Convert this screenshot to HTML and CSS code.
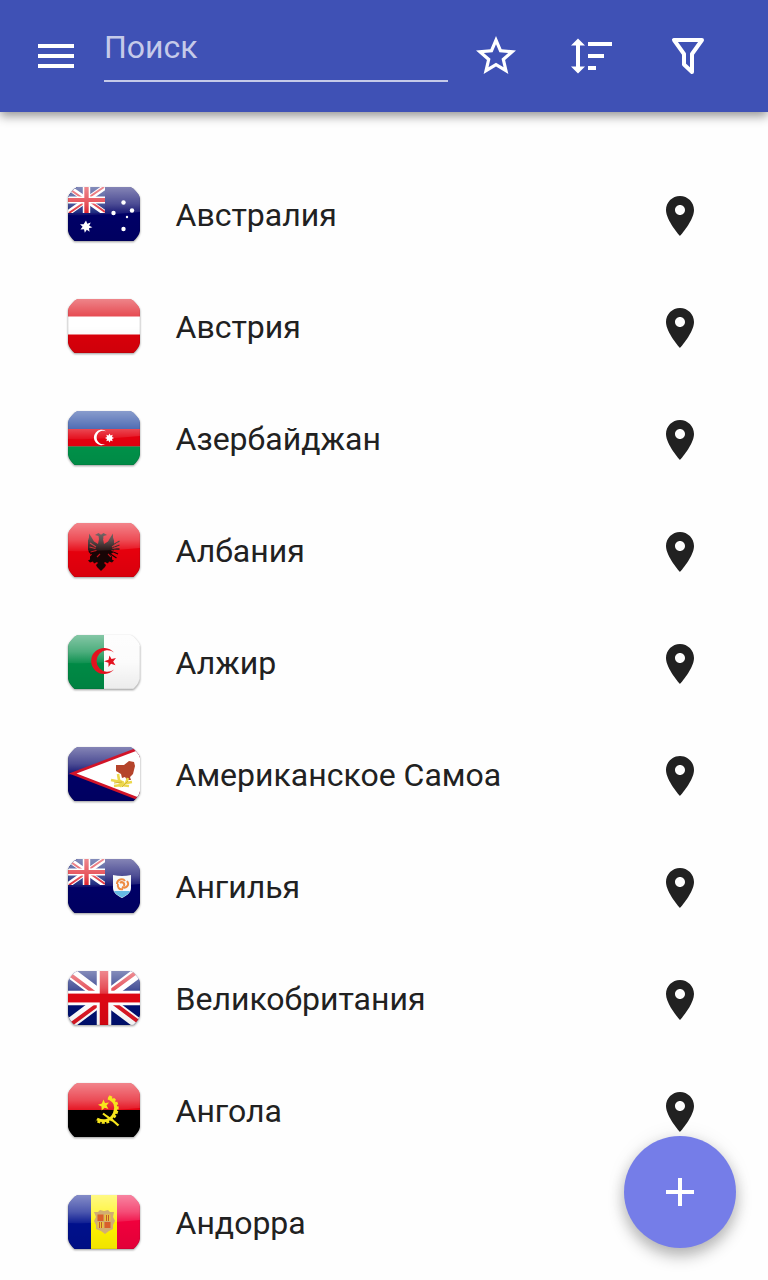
FILE: index.html
```html
<!DOCTYPE html>
<html lang="ru">

<head>
  <meta charset="utf-8">
  <meta name="viewport" content="width=device-width, initial-scale=1">
  <title>Страны</title>
  <link rel="stylesheet" href="styles.css">
</head>

<body>
  <svg class="defs" width="0" height="0" aria-hidden="true">
    <defs>
      <clipPath id="flag-shape">
        <path d="M0 11Q.5 8 3.500 5Q6.500 1 9.500 0H62.500Q65.500 1 68.500 5Q71.500 8 72 11V44Q71 49 65.500 54H6.500Q1 49 0 44z" />
      </clipPath>
      <linearGradient id="gloss-fill" x1="0" y1="0" x2="0" y2="1">
        <stop offset="0" stop-color="#fff" stop-opacity=".52" />
        <stop offset=".6" stop-color="#fff" stop-opacity=".3" />
        <stop offset="1" stop-color="#fff" stop-opacity=".06" />
      </linearGradient>
      <linearGradient id="shade-fill" x1="0" y1="0" x2="0" y2="1">
        <stop offset="0" stop-color="#000" stop-opacity="0" />
        <stop offset="1" stop-color="#000" stop-opacity=".06" />
      </linearGradient>
      <symbol id="gloss" viewBox="0 0 72 54">
        <path fill="url(#gloss-fill)" d="M0 0H72V25Q36 29 0 28z" />
        <path fill="url(#shade-fill)" d="M0 27H72V54H0z" />
        <path fill="none" stroke="#000" stroke-opacity=".12" d="M0 11V44Q1 49 6.500 54H65.500Q71 49 72 44V11" />
      </symbol>
      <symbol id="jack" viewBox="0 0 72 54" preserveAspectRatio="none">
        <path fill="#001070" d="M0 0h72v54H0z" />
        <path stroke="#fff" stroke-width="11" d="M0 0l72 54M72 0L0 54" />
        <path stroke="#dc1824" stroke-width="4" d="M0 2l36 27M36 25l36 27M70 0L36 25M36 29L2 54" />
        <path stroke="#fff" stroke-width="14.500" d="M36 0v54M0 27h72" />
        <path stroke="#dc0814" stroke-width="8.500" d="M36 0v54M0 27h72" />
      </symbol>
      <symbol id="pin" viewBox="0 0 24 24">
        <path d="M12 2C8.130 2 5 5.130 5 9c0 5.250 7 13 7 13s7-7.750 7-13c0-3.870-3.130-7-7-7zm0 9.500c-1.380 0-2.500-1.120-2.500-2.500s1.120-2.500 2.500-2.500 2.500 1.120 2.500 2.500-1.120 2.500-2.500 2.500z" />
      </symbol>
    </defs>
  </svg>

  <header class="toolbar">
    <button class="icon-button">
      <svg class="icon" viewBox="0 0 24 24"><path d="M3 18h18v-2H3v2zm0-5h18v-2H3v2zm0-7v2h18V6H3z" /></svg>
    </button>
    <input class="search" type="text" placeholder="Поиск" autocomplete="off">
    <div class="actions">
      <button class="icon-button">
        <svg class="icon" viewBox="0 0 24 24"><path d="M22 9.240l-7.190-.62L12 2 9.190 8.630 2 9.240l5.460 4.730L5.820 21 12 17.270 18.180 21l-1.630-7.030L22 9.240zM12 15.400l-3.760 2.270 1-4.280-3.320-2.880 4.380-.38L12 6.100l1.710 4.040 4.380.38-3.320 2.880 1 4.280L12 15.400z" /></svg>
      </button>
      <button class="icon-button">
        <svg class="icon" viewBox="0 0 48 48"><path d="M10 6.500l7 7h-5v21h5l-7 7-7-7h5v-21H3zM20 10h24v4H20zM20 22h16v4H20zM20 34h8v4h-8z" /></svg>
      </button>
      <button class="icon-button">
        <svg class="icon" viewBox="0 0 48 48"><path fill="none" stroke="currentColor" stroke-width="4" stroke-linejoin="round" d="M10 8h28L28 22v18l-8-7.500V22z" /></svg>
      </button>
    </div>
  </header>

  <ul class="list">
    <li class="row">
      <svg class="flag" viewBox="0 0 72 58">
        <g clip-path="url(#flag-shape)">
          <path fill="#000066" d="M0 0h72v54H0z" />
          <use href="#jack" width="37" height="26" />
          <use href="#gloss" width="72" height="54" />
          <path fill="#fff" d="M18 33.500l1.300 3.300 3.400-1.200-1.500 3.200 3.200 1.500-3.400 1 .6 3.500-2.800-2-2 3-.8-3.600-3.600.4 2.200-2.800-2.600-2.500 3.600-.1z" />
          <g fill="#fff">
            <circle cx="55.500" cy="15.500" r="2.200" />
            <circle cx="45.500" cy="26" r="2.200" />
            <circle cx="64" cy="23.500" r="2.200" />
            <circle cx="59" cy="30" r="1.200" />
            <circle cx="55.500" cy="42" r="2.200" />
          </g>
        </g>
      </svg>
      <span class="name">Австралия</span>
      <svg class="pin"><use href="#pin" /></svg>
    </li>
    <li class="row">
      <svg class="flag" viewBox="0 0 72 58">
        <g clip-path="url(#flag-shape)">
          <path fill="#dc000a" d="M0 0h72v54H0z" />
          <path fill="#fff" d="M0 17.500h72v18H0z" />
          <use href="#gloss" width="72" height="54" />
        </g>
      </svg>
      <span class="name">Австрия</span>
      <svg class="pin"><use href="#pin" /></svg>
    </li>
    <li class="row">
      <svg class="flag" viewBox="0 0 72 58">
        <g clip-path="url(#flag-shape)">
          <path fill="#0a3296" d="M0 0h72v18H0z" />
          <path fill="#e3000f" d="M0 18h72v17.500H0z" />
          <path fill="#00934a" d="M0 35.500h72V54H0z" />
          <use href="#gloss" width="72" height="54" />
          <path fill="#fff" d="M38 20.200a7.700 7.700 0 1 0 0 12.600 6.800 6.800 0 1 1 0-12.600z" />
          <path fill="#fff" d="M41.500 22.500l1 2 2.200-.7-.7 2.200 2 1-2 1 .7 2.200-2.200-.7-1 2-1-2-2.200.7.7-2.200-2-1 2-1-.7-2.200 2.200.7z" />
        </g>
      </svg>
      <span class="name">Азербайджан</span>
      <svg class="pin"><use href="#pin" /></svg>
    </li>
    <li class="row">
      <svg class="flag" viewBox="0 0 72 58">
        <g clip-path="url(#flag-shape)">
          <path fill="#e6000d" d="M0 0h72v54H0z" />
          <path fill="#180505" d="M36 16l-2-3.500-3.500-2.500-3.500 2 3.500 1 .5 3-1 5-4-2.500-3-5-2-3 0 4-1 3 0 3 0 3 0 3 1 3 3 2-2 2 0 3-2 1 2 2 3-1 1 2 3-1.500 1 1-2 2 1 2 4 4 4-4 1-2-2-2 1-1 3 1.500 1-2 3 1 2-2-2-1 0-3-2-2 3-2 1-3 0-3 0-3 0-3-1-3 0-4-2 3-3 5-4 2.500-1-5 .5-3 3.500-1-3.500-2-3.500 2.500z" />
          <path fill="none" stroke="#180505" stroke-width="1.300" d="M20.500 18l10 6M20.500 22l10 4M20.500 26h10M22 31l9-4M23.500 35l9-6M51.500 18l-10 6M51.500 22l-10 4M51.500 26h-10M50 31l-9-4M48.500 35l-9-6" />
          <path fill="none" stroke="#c4121a" stroke-width="1.100" d="M22 20l6 4M21.500 24l6 1.500M22.500 29l6-1.500M29 34l3-3M50 20l-6 4M50.500 24l-6 1.500M49.500 29l-6-1.500M43 34l-3-3" />
          <use href="#gloss" width="72" height="54" />
        </g>
      </svg>
      <span class="name">Албания</span>
      <svg class="pin"><use href="#pin" /></svg>
    </li>
    <li class="row">
      <svg class="flag" viewBox="0 0 72 58">
        <g clip-path="url(#flag-shape)">
          <path fill="#008a45" d="M0 0h36v54H0z" />
          <path fill="#fbfbfb" d="M36 0h36v54H36z" />
          <use href="#gloss" width="72" height="54" />
          <path fill="#e3121f" d="M46 17.500a13 13 0 1 0 0 17 10.800 10.800 0 1 1 0-17z" />
          <path fill="#e3121f" d="M41.500 20.500l2 3.600 4.500-1-2.800 3.400 2.300 3.700-4.500-1.400-2.500 3.200v-4.300l-4.500-1.500 4.500-1.400z" />
        </g>
      </svg>
      <span class="name">Алжир</span>
      <svg class="pin"><use href="#pin" /></svg>
    </li>
    <li class="row">
      <svg class="flag" viewBox="0 0 72 58">
        <g clip-path="url(#flag-shape)">
          <path fill="#000066" d="M0 0h72v54H0z" />
          <use href="#gloss" width="72" height="54" />
          <path fill="#d21428" d="M1 26.500L72-.5v54.500z" />
          <path fill="#fff" d="M8.500 26.500L72 2.500v48.500z" />
          <path fill="#b5442b" d="M48 18l8 0 5-4 5 1 1 4-2 8-3 3 1 3-4 0-2-3-3 1-1-4-5-3z" />
          <path fill="none" stroke="#ecd84c" stroke-width="2.600" d="M43 33l5 1 5 2M46 39l7-1 8 1M50 27l1 6 5 4M60 31l-2 5 6-1M55 34l-3 6" />
          <path fill="none" stroke="#d6b433" d="M46 36l8-1M54 40l6-6" />
        </g>
      </svg>
      <span class="name">Американское Самоа</span>
      <svg class="pin"><use href="#pin" /></svg>
    </li>
    <li class="row">
      <svg class="flag" viewBox="0 0 72 58">
        <g clip-path="url(#flag-shape)">
          <path fill="#000066" d="M0 0h72v54H0z" />
          <use href="#jack" width="37" height="26" />
          <use href="#gloss" width="72" height="54" />
          <path fill="#f5f8fa" d="M45 16q9 2 18 0v13c0 5-5 8-9 10-4-2-9-5-9-10z" />
          <path fill="#65b9e4" d="M46 32h16c-1 3-5 5-8 6.500-3-1.500-7-3.500-8-6.500z" />
          <path fill="none" stroke="#ee8a40" stroke-width="2" d="M49 25c0-5 6-6 8-3M59 22c3 4-1 8-5 6M55 30c-4 1-6-2-5-5M52 24c2-2 5 0 4 3" />
        </g>
      </svg>
      <span class="name">Ангилья</span>
      <svg class="pin"><use href="#pin" /></svg>
    </li>
    <li class="row">
      <svg class="flag" viewBox="0 0 72 58">
        <g clip-path="url(#flag-shape)">
          <use href="#jack" width="72" height="54" />
          <use href="#gloss" width="72" height="54" />
          <path fill="#dc0814" d="M0 22.800h72v8.400H0z" />
        </g>
      </svg>
      <span class="name">Великобритания</span>
      <svg class="pin"><use href="#pin" /></svg>
    </li>
    <li class="row">
      <svg class="flag" viewBox="0 0 72 58">
        <g clip-path="url(#flag-shape)">
          <path fill="#e3000f" d="M0 0h72v27H0z" />
          <use href="#gloss" width="72" height="54" />
          <path fill="#000" d="M0 27h72v27H0z" />
          <path fill="none" stroke="#f6e51c" stroke-width="3" d="M40 15c7 2 9.500 9 6.500 15-3 7-10 10-17.500 6" />
          <path fill="none" stroke="#f6e51c" stroke-width="2.500" stroke-dasharray="3 1.500" d="M41 13.500c8.500 3 10 11 7 17.500-4 8-12 11-20 6.500" />
          <path fill="none" stroke="#f6e51c" stroke-width="2.200" d="M35 30.500c5 4 11 7 15.500 12" />
          <path fill="#f6e51c" d="M35.500 16.500l1.500 3.500 4-.5-2.500 3 2 3.500-3.800-1.200-3 2.700-.2-4-3.500-1.700 3.800-1.300z" />
        </g>
      </svg>
      <span class="name">Ангола</span>
      <svg class="pin"><use href="#pin" /></svg>
    </li>
    <li class="row">
      <svg class="flag" viewBox="0 0 72 58">
        <g clip-path="url(#flag-shape)">
          <path fill="#00108c" d="M0 0h23v54H0z" />
          <path fill="#fff200" d="M23 0h26v54H23z" />
          <path fill="#f0003c" d="M49 0h23v54H49z" />
          <use href="#gloss" width="72" height="54" />
          <path fill="#d2ae72" d="M26 17l4 0 2-2 4 1 4-1 2 2 4 0-1 5 2 4-2 4 0 4-4 2-4 3-4-3-5-2 0-4-2-4 2-4z" />
          <path fill="#d95f2b" d="M29.500 19.500h6v6.500h-6zM36.500 27h6v6h-6z" />
          <path fill="#edc53a" d="M36.500 19.500h6v6.500h-6zM29.500 27h6v6h-6z" />
          <path fill="none" stroke="#c05a2a" d="M38.500 20v6M40.500 20v6M31.500 27v6M33.500 27v6" />
        </g>
      </svg>
      <span class="name">Андорра</span>
      <svg class="pin"><use href="#pin" /></svg>
    </li>
  </ul>

  <button class="fab">
    <svg class="icon" viewBox="0 0 24 24"><path d="M19 13h-6v6h-2v-6H5v-2h6V5h2v6h6v2z" /></svg>
  </button>
</body>

</html>
```
FILE: styles.css
```css
* {
  box-sizing: border-box;
  margin: 0;
  padding: 0;
}

body {
  background: #fefefe;
  color: #212121;
  font-family: Roboto, "Noto Sans", sans-serif;
  font-size: 32px;
}

button {
  border: none;
  background: transparent;
  color: #fff;
}

.defs {
  display: block;
}

.toolbar {
  display: flex;
  align-items: center;
  height: 112px;
  padding: 0 56px 0 32px;
  background: #3f51b5;
  box-shadow: 0 4px 10px rgba(0, 0, 0, .42);
}

.icon-button {
  width: 48px;
  height: 48px;
  flex: none;
}

.icon {
  display: block;
  width: 48px;
  height: 48px;
  fill: currentColor;
}

.search {
  width: 344px;
  height: 52px;
  margin: 0 24px;
  padding-bottom: 16px;
  border: none;
  border-bottom: 2px solid #c5cae9;
  outline: none;
  background: transparent;
  color: #fff;
  font: inherit;
}

.search::placeholder {
  color: #c5cae9;
  opacity: 1;
}

.actions {
  display: flex;
  gap: 48px;
}

.list {
  padding-top: 48px;
  list-style: none;
}

.row {
  display: flex;
  align-items: center;
  height: 112px;
  padding: 0 64px 0 68px;
}

.flag {
  width: 72px;
  height: 58px;
  flex: none;
  overflow: visible;
  filter: drop-shadow(0 1px 1px rgba(0, 0, 0, .4));
}

.name {
  flex: 1;
  margin-left: 35.5px;
  padding-bottom: 2px;
}

.pin {
  width: 48px;
  height: 48px;
  fill: #212121;
}

.fab {
  position: fixed;
  right: 32px;
  bottom: 32px;
  display: flex;
  align-items: center;
  justify-content: center;
  width: 112px;
  height: 112px;
  border-radius: 50%;
  background: #757de8;
  box-shadow: 0 8px 16px rgba(0, 0, 0, .28), 0 0 20px rgba(0, 0, 0, .08);
}
```
